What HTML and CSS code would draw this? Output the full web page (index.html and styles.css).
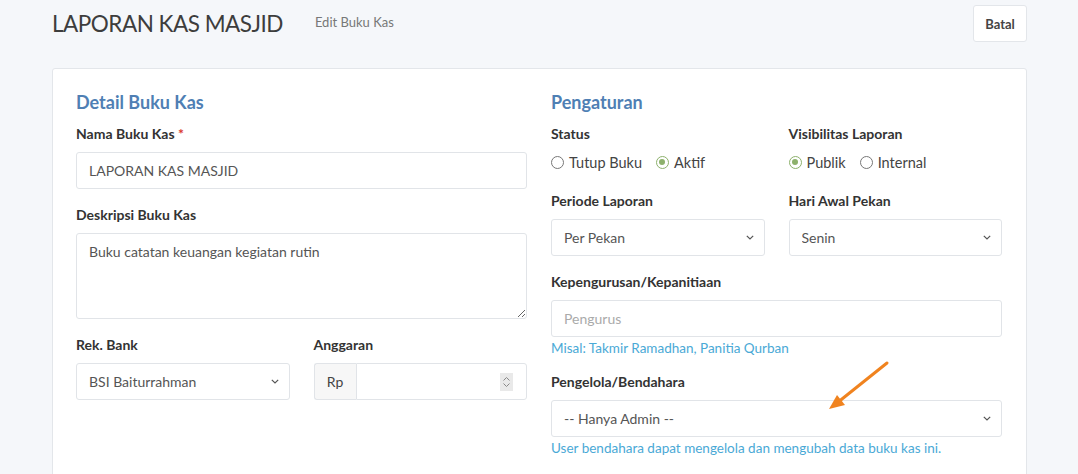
FILE: index.html
```html
<!DOCTYPE html>
<html>
<head>
<meta charset="utf-8">
<link rel="stylesheet" href="styles.css">
</head>
<body>
<div class="page">
  <header class="header">
    <h1 class="title">LAPORAN KAS MASJID</h1>
    <span class="subtitle">Edit Buku Kas</span>
    <button class="btn">Batal</button>
  </header>
  <section class="card">
    <div class="col">
      <h3 class="section-title">Detail Buku Kas</h3>
      <div class="group">
        <label class="label">Nama Buku Kas <span class="req">*</span></label>
        <input class="control" type="text" value="LAPORAN KAS MASJID">
      </div>
      <div class="group">
        <label class="label">Deskripsi Buku Kas</label>
        <textarea class="control area">Buku catatan keuangan kegiatan rutin</textarea>
      </div>
      <div class="row">
        <div class="group">
          <label class="label">Rek. Bank</label>
          <div class="select-wrap">
            <select class="control"><option>BSI Baiturrahman</option></select>
            <svg class="chev" width="8" height="5" viewBox="0 0 8 5"><path d="M0.8 0.8 4 4 7.2 0.8" fill="none" stroke="#555" stroke-width="1.2"/></svg>
          </div>
        </div>
        <div class="group">
          <label class="label">Anggaran</label>
          <div class="input-group">
            <span class="addon">Rp</span>
            <input class="control grow" type="text">
            <span class="spin"><svg width="13" height="18" viewBox="0 0 13 18"><path d="M3.5 7.5 6.5 4.5 9.5 7.5M3.5 10.5 6.5 13.5 9.5 10.5" fill="none" stroke="#888" stroke-width="1"/></svg></span>
          </div>
        </div>
      </div>
    </div>
    <div class="col">
      <h3 class="section-title">Pengaturan</h3>
      <div class="row">
        <div class="group">
          <label class="label">Status</label>
          <div class="radios">
            <span class="radio"><span class="dot"></span>Tutup Buku</span>
            <span class="radio"><span class="dot on"></span>Aktif</span>
          </div>
        </div>
        <div class="group">
          <label class="label">Visibilitas Laporan</label>
          <div class="radios">
            <span class="radio"><span class="dot on"></span>Publik</span>
            <span class="radio"><span class="dot"></span>Internal</span>
          </div>
        </div>
      </div>
      <div class="row">
        <div class="group">
          <label class="label">Periode Laporan</label>
          <div class="select-wrap">
            <select class="control"><option>Per Pekan</option></select>
            <svg class="chev" width="8" height="5" viewBox="0 0 8 5"><path d="M0.8 0.8 4 4 7.2 0.8" fill="none" stroke="#555" stroke-width="1.2"/></svg>
          </div>
        </div>
        <div class="group">
          <label class="label">Hari Awal Pekan</label>
          <div class="select-wrap">
            <select class="control"><option>Senin</option></select>
            <svg class="chev" width="8" height="5" viewBox="0 0 8 5"><path d="M0.8 0.8 4 4 7.2 0.8" fill="none" stroke="#555" stroke-width="1.2"/></svg>
          </div>
        </div>
      </div>
      <div class="group">
        <label class="label">Kepengurusan/Kepanitiaan</label>
        <input class="control" type="text" placeholder="Pengurus">
        <p class="help">Misal: Takmir Ramadhan, Panitia Qurban</p>
      </div>
      <div class="group">
        <label class="label">Pengelola/Bendahara</label>
        <div class="select-wrap">
          <select class="control"><option>-- Hanya Admin --</option></select>
          <svg class="chev" width="8" height="5" viewBox="0 0 8 5"><path d="M0.8 0.8 4 4 7.2 0.8" fill="none" stroke="#555" stroke-width="1.2"/></svg>
        </div>
        <p class="help">User bendahara dapat mengelola dan mengubah data buku kas ini.</p>
      </div>
    </div>
    <svg class="arrow" width="70" height="60" viewBox="0 0 70 60">
      <path d="M62 4 L12 44" stroke="#f0831f" stroke-width="3" stroke-linecap="round" fill="none"/>
      <path d="M4 50 L12 36 L20 46 Z" fill="#f0831f"/>
    </svg>
  </section>
</div>
</body>
</html>
```

FILE: styles.css
```css
* { box-sizing: border-box; }
html, body { margin: 0; padding: 0; }
body {
  background: #f5f7fa;
  font-family: "Lato", "Open Sans", sans-serif;
  color: #333;
  font-size: 14px;
  height: 474px;
  overflow: hidden;
}
.page { padding: 5px 51px 0 52px; }
.header {
  display: flex;
  align-items: center;
  height: 37px;
  margin-bottom: 26px;
}
.title {
  margin: 0;
  font-size: 22.5px;
  font-weight: 400;
  color: #3d3d3d;
  letter-spacing: -0.5px;
}
.subtitle {
  margin-left: 32px;
  font-size: 13px;
  color: #777;
  margin-top: -3px;
}
.btn {
  margin-left: auto;
  height: 37px;
  width: 54px;
  background: #fff;
  border: 1px solid #e3e6ea;
  border-radius: 3px;
  font-family: inherit;
  font-weight: 700;
  font-size: 13px;
  color: #444;
  padding: 0;
}
.card {
  position: relative;
  background: #fff;
  border: 1px solid #e3e6ea;
  border-radius: 3px;
  padding: 22px 24px 40px 23px;
  display: grid;
  grid-template-columns: 451px 451px;
  column-gap: 24px;
  align-items: start;
}
.section-title {
  margin: 0 0 11px;
  font-size: 18px;
  line-height: 22px;
  font-weight: 700;
  color: #4f7fb4;
}
.group { margin-bottom: 16px; display: flex; flex-direction: column; }
.label {
  font-weight: 700;
  font-size: 14px;
  line-height: 20px;
  margin-bottom: 8px;
  color: #333;
}
.req { color: #d9342b; }
.control {
  height: 37px;
  width: 100%;
  border: 1px solid #e1e4e8;
  border-radius: 3px;
  background: #fff;
  padding: 0 12px;
  font-family: inherit;
  font-size: 14px;
  color: #555;
  outline: none;
}
.select-wrap { position: relative; }
select.control {
  -webkit-appearance: none;
  appearance: none;
  padding: 0 28px 0 12px;
}
.chev {
  position: absolute;
  right: 11px;
  top: 16px;
  pointer-events: none;
}
.control::placeholder { color: #aaa; }
.area {
  height: 86px;
  padding: 9px 12px;
  resize: vertical;
  line-height: 18px;
}
.row {
  display: grid;
  grid-template-columns: 1fr 1fr;
  column-gap: 24px;
}
.row .group { min-width: 0; }
.input-group { display: flex; position: relative; }
.addon {
  width: 42px;
  height: 37px;
  border: 1px solid #e1e4e8;
  border-right: none;
  border-radius: 3px 0 0 3px;
  background: #f7f7f7;
  display: flex;
  align-items: center;
  justify-content: center;
  font-size: 14px;
  color: #444;
}
.grow { flex: 1; border-radius: 0 3px 3px 0; }
.spin {
  position: absolute;
  right: 14px;
  top: 10px;
  width: 13px;
  height: 18px;
  background: #e9e9e9;
  display: flex;
}
.radios {
  display: flex;
  gap: 14px;
  align-items: center;
  margin-bottom: 3px;
  margin-top: -8px;
  padding-top: 8px;
  height: 28px;
}
.radio {
  display: inline-flex;
  align-items: center;
  font-size: 14.5px;
  color: #444;
}
.dot {
  width: 13px;
  height: 13px;
  border: 1.5px solid #777;
  border-radius: 50%;
  margin-right: 5px;
  position: relative;
}
.dot.on { border-color: #8db16c; }
.dot.on::after {
  content: "";
  position: absolute;
  left: 2px; top: 2px;
  width: 6px; height: 6px;
  border-radius: 50%;
  background: #8db16c;
}
.help {
  margin: 3px 0 0;
  font-size: 13.5px;
  line-height: 16px;
  color: #4aa9d6;
}
.arrow {
  position: absolute;
  left: 772px;
  top: 290px;
}
```
